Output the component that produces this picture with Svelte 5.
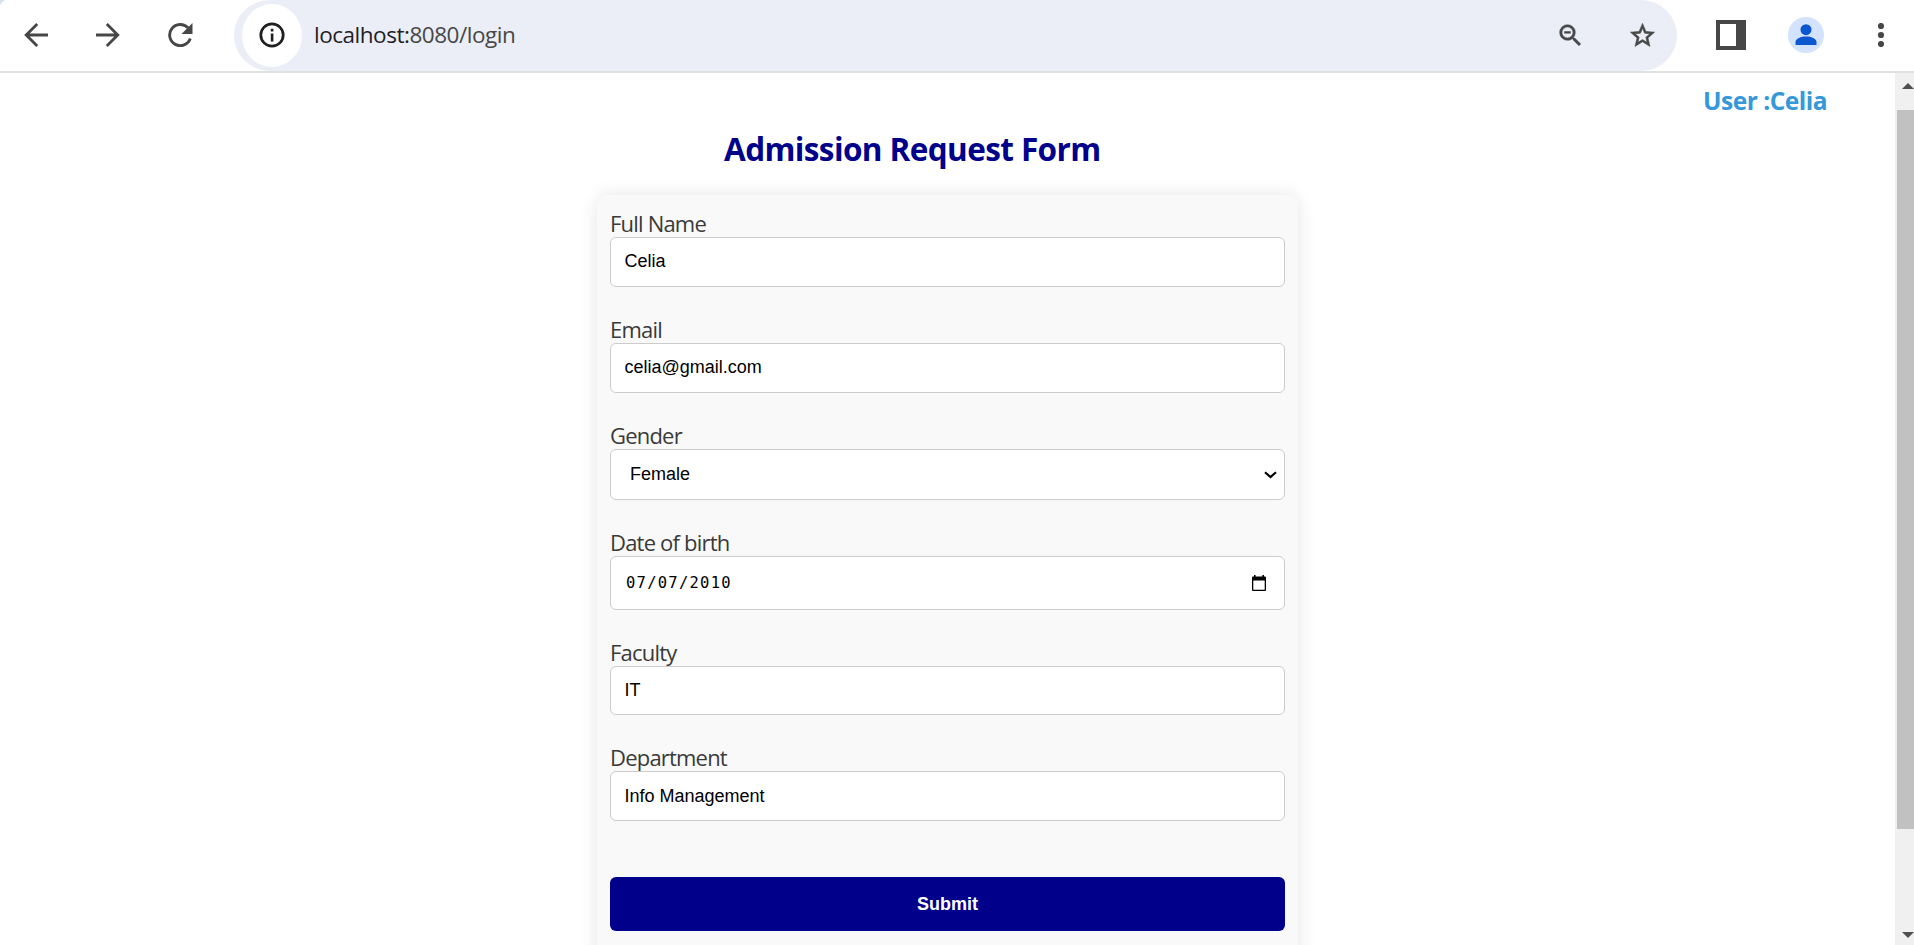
<script>
  let fullName = $state('Celia');
  let email = $state('celia@gmail.com');
  let faculty = $state('IT');
  let department = $state('Info Management');
</script>

<div class="window">
  <header class="toolbar">
    <nav class="nav">
      <svg width="24" height="24" viewBox="0 0 24 24" fill="none" stroke="#474747" stroke-width="2.8"><path d="M24 12H2M13.2 1L2.2 12l11 11" /></svg>
      <svg width="24" height="24" viewBox="0 0 24 24" fill="none" stroke="#474747" stroke-width="2.8"><path d="M0 12h22M10.800 1l11 11-11 11" /></svg>
      <svg width="25" height="24" viewBox="0 0 25 24"><path d="M22.300 15.500A10.600 10.600 0 1 1 20 4.800" fill="none" stroke="#474747" stroke-width="2.900" /><path d="M24.500 0v11h-11z" fill="#474747" /></svg>
    </nav>
    <div class="omnibox">
      <span class="site">
        <svg width="26" height="26" viewBox="0 0 26 26"><circle cx="13" cy="13" r="11.200" fill="none" stroke="#1f1f1f" stroke-width="2.700" /><path d="M11.800 11.500h2.600v8h-2.600zM11.800 6.800h2.600v2.600h-2.600z" fill="#1f1f1f" /></svg>
      </span>
      <span class="url">localhost:<span>8080/login</span></span>
      <svg class="zoom" width="29" height="29" viewBox="0 0 24 24" fill="#474747" stroke="#474747" stroke-width=".4"><path d="M15.500 14h-.790l-.280-.270A6.471 6.471 0 0 0 16 9.500 6.500 6.500 0 1 0 9.500 16c1.610 0 3.090-.590 4.230-1.570l.270.280v.790l5 4.990L20.490 19l-4.990-5zm-6 0C7.010 14 5 11.990 5 9.500S7.010 5 9.500 5 14 7.010 14 9.500 11.990 14 9.500 14zM7 8.700h5v1.500H7z" /></svg>
      <svg class="star" width="29" height="29" viewBox="0 0 24 24" fill="#474747" stroke="#474747" stroke-width=".5"><path d="M22 9.240l-7.190-.620L12 2 9.190 8.630 2 9.240l5.460 4.730L5.820 21 12 17.270 18.180 21l-1.630-7.030L22 9.240zM12 15.400l-3.760 2.270 1-4.280-3.320-2.880 4.380-.380L12 6.100l1.710 4.040 4.380.380-3.320 2.880 1 4.280L12 15.400z" /></svg>
    </div>
    <div class="actions">
      <svg width="30" height="30" viewBox="0 0 30 30"><path d="M0 0h30v30H0z" fill="#474747" /><path d="M4 4h16v22H4z" fill="#fff" /></svg>
      <svg width="36" height="36" viewBox="0 0 36 36"><circle cx="18" cy="18" r="18" fill="#d3e3fd" /><circle cx="18" cy="12.700" r="5.500" fill="#0b57d0" /><path d="M7.500 28v-3c0-3.500 5.500-5.500 10.500-5.500s10.500 2 10.500 5.500v3z" fill="#0b57d0" /></svg>
      <svg width="8" height="24" viewBox="0 0 8 24" fill="#474747"><circle cx="4" cy="3" r="3.100" /><circle cx="4" cy="12" r="3.100" /><circle cx="4" cy="21" r="3.100" /></svg>
    </div>
  </header>

  <div class="viewport">
    <main>
      <p class="user"><span>User :Celia</span></p>
      <h1>Admission Request Form</h1>
      <form>
        <label class="field"><span class="name">Full Name</span><input bind:value={fullName} /></label>
        <label class="field"><span class="name">Email</span><input bind:value={email} /></label>
        <div class="field">
          <span class="name">Gender</span>
          <div class="box select"><span>Female</span>
            <svg width="13" height="8" viewBox="0 0 13 8" fill="none" stroke="#000" stroke-width="2.200"><path d="M1 1.200l5.500 4.900L12 1.200" /></svg>
          </div>
        </div>
        <div class="field">
          <span class="name">Date of birth</span>
          <div class="box date"><span>07/07/2010</span>
            <svg width="14" height="16" viewBox="0 0 14 16"><path d="M2 0h1.600v1.500h6.800V0H12v1.500h1q1 0 1 1V15q0 1-1 1H1q-1 0-1-1V2.500q0-1 1-1h1zM1.300 5.500v9.200h11.400V5.500z" fill="#000" fill-rule="evenodd" /></svg>
          </div>
        </div>
        <label class="field"><span class="name">Faculty</span><input class="short" bind:value={faculty} /></label>
        <label class="field"><span class="name">Department</span><input class="low" bind:value={department} /></label>
        <button type="button">Submit</button>
      </form>
    </main>
    <aside class="scrollbar">
      <svg width="12" height="6" viewBox="0 0 12 6"><path d="M0 6L6 0l6 6z" fill="#505050" /></svg>
      <div class="thumb"></div>
      <svg width="12" height="6" viewBox="0 0 12 6"><path d="M0 0h12L6 6z" fill="#505050" /></svg>
    </aside>
  </div>
</div>

<style>
  :global(body) { margin: 0; background: #fff; overflow: hidden; }
  svg { display: block; flex: none; }
  .window { height: 945px; display: flex; flex-direction: column; overflow: hidden; background: #fff; font-family: "Open Sans", "Noto Sans", sans-serif; }
  .toolbar { box-sizing: border-box; height: 73px; flex: none; display: flex; border-bottom: 2px solid #e0e2e0; background: radial-gradient(circle at 8px 8px, #fff 8px, #d9e1ec 8.500px) 0 0 / 8px 8px no-repeat #fff; }
  .nav { box-sizing: border-box; width: 234px; padding: 0 0 1px 24px; display: flex; align-items: center; gap: 48px; }
  .omnibox { box-sizing: border-box; width: 1443px; height: 71px; border-radius: 36px; background: #ebeef7; display: flex; align-items: center; padding: 0 0 1px 8px; }
  .site { width: 60px; height: 63px; border-radius: 50%; background: #fff; display: flex; align-items: center; justify-content: center; }
  .url { margin: 0 0 2px 12px; font-size: 22.500px; letter-spacing: -0.480px; color: #1f1f1f; white-space: nowrap; }
  .url span { color: #474747; }
  .zoom { margin-left: auto; }
  .star { margin: 0 20px 0 43px; }
  .actions { display: flex; align-items: center; gap: 42px; padding: 0 0 1px 39px; }
  .actions svg:last-child { margin-left: 11px; }
  .viewport { flex: 1; min-height: 0; display: flex; }
  main { flex: 1; min-width: 0; overflow: hidden; }
  .user { margin: 0; padding: 11px 68px 0 0; height: 35px; line-height: 34px; text-align: right; font-size: 24.500px; font-weight: 700; color: #3498db; letter-spacing: -0.500px; }
  h1 { margin: 8px 0 24px 724px; height: 44px; line-height: 43px; font-size: 31.500px; font-weight: 700; color: #00008b; letter-spacing: -0.600px; white-space: nowrap; }
  form { box-sizing: border-box; width: 701px; height: 780px; margin-left: 597px; padding: 14px 13px; background: #f9f9f9; border-radius: 10px; box-shadow: 0 0 18px rgba(0, 0, 0, 0.1); display: flex; flex-direction: column; gap: 28px; }
  .field { display: flex; flex-direction: column; }
  .name { height: 28px; line-height: 28px; font-size: 22px; color: #3a3a3a; letter-spacing: -0.800px; white-space: nowrap; }
  input, .box { box-sizing: border-box; width: 675px; height: 50px; margin: 0; border: 1px solid #ccc; border-radius: 6px; background: #fff; padding: 0 13.500px 1px; font: 18px "Liberation Sans", Arial, sans-serif; color: #000; outline: none; }
  input.short { height: 49px; padding-bottom: 0; }
  input.low { padding: 1px 13.500px 0; }
  .box { display: flex; align-items: center; justify-content: space-between; }
  .select { height: 51px; padding: 0 7px 0 19px; }
  .select svg { margin-top: 1px; }
  .date { height: 54px; padding: 0 18px 0 15px; font-family: "DejaVu Sans Mono", monospace; font-size: 15.500px; letter-spacing: 1.250px; }
  button { width: 675px; height: 54px; flex: none; margin-top: 28px; padding: 0; border: 0; border-radius: 6px; background: #00008b; color: #fff; font: bold 18px "Liberation Sans", Arial, sans-serif; }
  .scrollbar { box-sizing: border-box; width: 19px; padding: 10px 0 7px 2px; background: #f0f0f0; display: flex; flex-direction: column; align-items: flex-end; }
  .thumb { width: 17px; height: 719px; margin-top: 21px; margin-bottom: auto; background: #c1c1c1; }
</style>
